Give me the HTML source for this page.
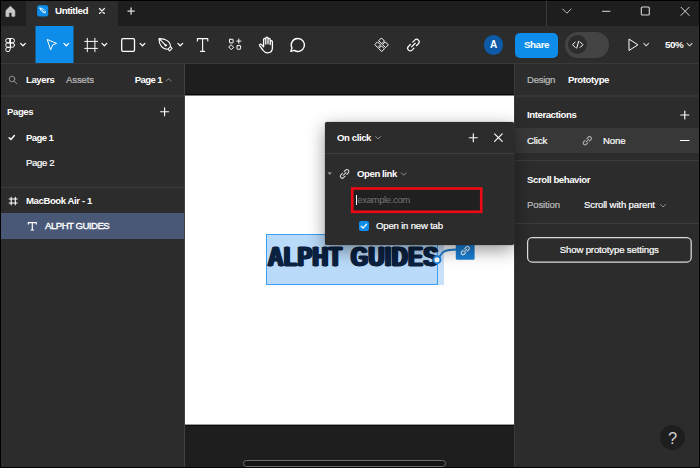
<!DOCTYPE html>
<html>
<head>
<meta charset="utf-8">
<style>
*{box-sizing:border-box;margin:0;padding:0}
html,body{width:700px;height:468px;overflow:hidden;background:#000}
body{font-family:"Liberation Sans",sans-serif;color:#fff;font-size:9.6px;position:relative}
.abs{position:absolute}
.t{position:absolute;white-space:nowrap;line-height:12px;font-size:9.6px;letter-spacing:-0.15px;-webkit-text-stroke:0.2px currentColor}
.b{font-weight:bold;letter-spacing:-0.42px;-webkit-text-stroke:0}
.g{color:#bcbcbc}
svg{position:absolute;overflow:visible;fill:none;stroke:#fff;stroke-width:1.15;stroke-linecap:round;stroke-linejoin:round}
#titlebar{left:1px;top:1px;width:698px;height:25px;background:#1e1e1e}
#hometab{left:1px;top:1px;width:25px;height:25px;background:#1f1f1f}
#filetab{left:26px;top:1px;width:92px;height:25px;background:#2c2c2c}
#toolbar{left:1px;top:26px;width:698px;height:38px;background:#2c2c2c}
#selbox{left:35.7px;top:26px;width:37.6px;height:37.5px;background:#0d8ce9}
#tbline{left:1px;top:63px;width:698px;height:1px;background:#3a3a3a}
#canvas{left:185px;top:64px;width:329px;height:403px;background:#1e1e1e}
#frame{left:185px;top:95px;width:328.6px;height:329.6px;background:#fff}
#leftp{left:1px;top:64px;width:183px;height:403px;background:#2c2c2c}
#rightp{left:514px;top:64px;width:185px;height:403px;background:#2c2c2c;border-left:1px solid #3a3a3a}
.hl{position:absolute;height:1px;background:#3d3d3d}
#selrow{left:1px;top:213px;width:183px;height:26px;background:#4a5878}
#popup{left:325px;top:122px;width:189px;height:123px;background:#2c2c2c;border-radius:2px;box-shadow:0 5px 17px rgba(0,0,0,.42),0 0 1px rgba(0,0,0,.7)}
</style>
</head>
<body>
<div class="abs" id="titlebar"></div>
<div class="abs" id="hometab"></div>
<div class="abs" id="filetab"></div>
<div class="abs" id="toolbar"></div>
<svg style="left:0;top:0" width="7" height="468"><rect x="35.5" y="26" width="38" height="37.7" fill="#0d8ce9" stroke="none"/></svg>
<div class="abs" id="tbline"></div>
<div class="abs" id="canvas"></div>
<svg style="left:0;top:0" width="700" height="468"><rect x="185" y="94.2" width="329" height="331.5" fill="#050505" stroke="none"/><rect x="185" y="95.5" width="329" height="329.1" fill="#fff" stroke="none"/></svg>
<div class="abs" id="leftp"></div>
<div class="abs" id="rightp"></div>

<!-- ===== title bar ===== -->
<svg style="left:0;top:0" width="700" height="26">
  <!-- home -->
  <path d="M6 16.2V10.5L10.4 6.3l4.4 4.2v5.7h-2.9v-3.8H8.9v3.8z" fill="#c8c8c8" stroke="#c8c8c8" stroke-width=".8"/>
  <!-- file icon -->
  <rect x="37.2" y="5.3" width="11" height="11.2" rx="2" fill="#0d8ce9" stroke="none"/>
  <path d="M40 8.2c2.6-.3 5 1.2 5.6 4.6-2.6.2-5-1.4-5.6-4.6zM40 8.2l4.2 4" stroke="#fff" stroke-width=".8"/>
  <!-- tab close -->
  <path d="M99.5 8.5l4.9 4.9M104.4 8.5l-4.9 4.9" stroke="#e6e6e6" stroke-width="1.35"/>
  <!-- plus -->
  <path d="M131.1 7.8v6.4M127.9 11h6.4" stroke="#e0e0e0" stroke-width="1.25"/>
  <!-- separator -->
  <path d="M546.5 1v25" stroke="#3a3a3a" stroke-width="1"/>
  <!-- chevron down -->
  <path d="M562.7 9l4.2 4.2 4.2-4.2" stroke="#bdbdbd" stroke-width="1"/>
  <!-- minimize -->
  <path d="M602.5 11.3h7.5" stroke="#d8d8d8" stroke-width="1"/>
  <!-- maximize -->
  <rect x="641.3" y="7" width="8" height="8" rx="1" stroke="#d8d8d8" stroke-width="1.1"/>
  <!-- close -->
  <path d="M681 7.2l8.2 8.2M689.2 7.2l-8.2 8.2" stroke="#d8d8d8" stroke-width="1"/>
</svg>
<div class="t b" style="left:55px;top:5px;font-size:9.8px">Untitled</div>

<!-- ===== toolbar ===== -->
<svg style="left:0;top:26px" width="700" height="38">
  <!-- figma logo (y offsets relative to 26) -->
  <g stroke="#fff" stroke-width="1" transform="translate(0,-26)">
    <path d="M10.1 38.5H7.9a2.2 2.2 0 0 0 0 4.4h2.2zM10.1 38.5h2.2a2.2 2.2 0 0 1 0 4.4h-2.2z"/>
    <path d="M10.1 42.9H7.9a2.2 2.2 0 0 0 0 4.4h2.2z"/>
    <circle cx="12.3" cy="45.1" r="2.2"/>
    <path d="M10.1 47.3H7.9a2.2 2.2 0 1 0 2.2 2.2z"/>
    <!-- chevrons -->
    <path d="M20.6 43.4l2.4 2.4 2.4-2.4" stroke-width="1.25"/>
    <path d="M63.9 43.4l2.4 2.4 2.4-2.4" stroke-width="1.25"/>
    <path d="M102.0 43.4l2.4 2.4 2.4-2.4" stroke-width="1.25"/>
    <path d="M140.1 43.4l2.4 2.4 2.4-2.4" stroke-width="1.25"/>
    <path d="M177.9 43.4l2.4 2.4 2.4-2.4" stroke-width="1.25"/>
    <path d="M643.8 43.4l2.4 2.4 2.4-2.4" stroke="#d4d4d4" stroke-width="1.05"/>
    <path d="M687.2 43.4l2.4 2.4 2.4-2.4" stroke="#d4d4d4" stroke-width="1.05"/>
    <!-- move arrow -->
    <path d="M47.6 39.6l9 3.8-4 1.6-1.8 4.6z"/>
    <!-- frame # -->
    <path d="M87.3 38.3v13.4M94.9 38.3v13.4M84.7 41.4h12.8M84.7 48.4h12.8"/>
    <!-- rect -->
    <rect x="121.7" y="38.6" width="12.8" height="12.8" rx="1.3" stroke-width="1.3"/>
    <!-- pen -->
    <path d="M159 38.6C165.5 38.4 170.6 41.5 170.5 46.7L172.1 48.3L169.6 50.8L167.9 49.2C162.5 49.4 158.8 45 159 38.6zM170.5 46.7L167.9 49.2M159 38.6L165 44.6" stroke-width="1.1"/>
    <circle cx="165.7" cy="45.3" r=".9" fill="#fff" stroke-width=".6"/>
    <!-- T -->
    <path d="M197.4 41v-2.4h10.4V41M202.6 38.6v12.8M200.6 51.4h4" stroke-width="1.1"/>
    <!-- resources -->
    <rect x="229.5" y="39.3" width="3.6" height="3.6" rx=".4"/>
    <path d="M238.8 39v4.2M236.7 41.1h4.2"/>
    <path d="M231.3 45l2.3 2.3-2.3 2.3-2.3-2.3z"/>
    <rect x="237" y="45.6" width="3.6" height="3.6" rx=".4"/>
    <!-- hand -->
    <path d="M263.6 44.5v-5a1.1 1.1 0 0 1 2.2 0v4.5M265.8 43.5v-5.3a1.1 1.1 0 0 1 2.2 0v5.3M268 43.8v-4.4a1.1 1.1 0 0 1 2.2 0v5M270.2 44.5v-2.8a1.1 1.1 0 0 1 2.2 0v6.3c0 3-2 4.8-4.8 4.8-2.4 0-3.6-1-4.8-2.8l-3-4.2c-.8-1.2.8-2.4 1.8-1.2l2 2.2V44" stroke-width="1.3"/>
    <!-- comment -->
    <path d="M297.9 38.5a6.5 6.5 0 1 1-3.6 11.9l-3.5.9 1.2-3.2a6.5 6.5 0 0 1 5.9-9.6z" stroke-width="1.35"/>
    <!-- components -->
    <path d="M381.70 38.25l2.75 2.75-2.75 2.75-2.75-2.75zM381.70 46.05l2.75 2.75-2.75 2.75-2.75-2.75zM377.80 42.15l2.75 2.75-2.75 2.75-2.75-2.75zM385.60 42.15l2.75 2.75-2.75 2.75-2.75-2.75z" stroke-width="1"/>
    <!-- link -->
    <g transform="translate(413.4,45.1) rotate(-45) scale(1.28)" stroke="#fff" stroke-width="0.94"><path d="M-1.3-2h-2.200a2 2 0 0 0 0 4h2.200M1.3-2h2.200a2 2 0 0 1 0 4h-2.200M-2 0h4"/></g>
    <!-- play -->
    <path d="M629 39.5v11l8.6-5.5z"/>
  </g>
</svg>
<!-- avatar -->
<div class="abs" style="left:483.8px;top:35.3px;width:19.4px;height:19.4px;border-radius:50%;background:#0c5aa8"></div>
<div class="t b" style="left:483.8px;top:39px;width:19.4px;text-align:center;font-size:10px;letter-spacing:0">A</div>
<!-- share -->
<div class="abs" style="left:515px;top:32.5px;width:43px;height:25.2px;border-radius:5px;background:#0d8ce9"></div>
<div class="t b" style="left:515px;top:39px;width:43px;text-align:center;font-size:9.8px">Share</div>
<!-- dev toggle -->
<div class="abs" style="left:565px;top:32px;width:43.8px;height:26px;border-radius:13px;background:#444"></div>
<div class="abs" style="left:568px;top:35px;width:19.4px;height:19.4px;border-radius:50%;background:#2c2c2c"></div>
<svg style="left:568px;top:35px" width="20" height="20"><path d="M7.2 7l-2.7 2.7 2.7 2.7M12.2 7l2.7 2.7-2.7 2.7M10.7 6.3l-2 6.8" stroke-width="1"/></svg>
<div class="t b" style="left:665px;top:39px;font-size:9.8px">50%</div>

<!-- ===== left panel ===== -->
<div class="hl" style="left:1px;top:95px;width:183.6px;height:2px;background:#353535"></div>
<svg style="left:0;top:64px" width="185" height="200">
  <g transform="translate(0,-64)">
    <circle cx="12" cy="79" r="2.8" stroke="#929292" stroke-width="1"/><path d="M14.2 81.2l2.6 2.6" stroke="#929292" stroke-width="1"/>
    <path d="M166.3 81l2.4-2.4 2.4 2.4" stroke="#929292" stroke-width=".9"/>
    <path d="M164.6 107.7v8M160.6 111.7h8"/>
    <path d="M9.1 137.7l1.8 1.8 3.5-4" stroke-width="1.4"/>
    <path d="M11.2 197.2v7.6M15.3 197.2v7.6M9.2 199h8M9.2 203h8" stroke-width="1.1"/>
  </g>
</svg>
<div class="t b" style="left:26px;top:73.5px">Layers</div>
<div class="t g" style="left:66px;top:73.5px">Assets</div>
<div class="t b" style="left:134.8px;top:73.5px;letter-spacing:-0.62px">Page 1</div>
<div class="t b" style="left:7px;top:106px">Pages</div>
<div class="t b" style="left:26px;top:131.6px;letter-spacing:-0.62px">Page 1</div>
<div class="t" style="left:26px;top:156.6px;letter-spacing:-0.35px">Page 2</div>
<div class="hl" style="left:1px;top:187.3px;width:183.6px"></div>
<div class="t b" style="left:26px;top:194.8px">MacBook Air - 1</div>
<div class="abs" id="selrow"></div>
<svg style="left:0;top:213px" width="185" height="26"><path d="M28.3 11.1V9.6h8v1.5M32.3 9.6v7.4M31 17h2.6" stroke-width="1.15"/></svg>
<div class="t" style="left:45px;top:220.3px;letter-spacing:-0.5px;-webkit-text-stroke:0.35px #fff">ALPHT GUIDES</div>

<div class="abs" style="left:184px;top:64px;width:1px;height:403px;background:#414141"></div>
<!-- ===== right panel ===== -->
<div class="t g" style="left:527px;top:73.5px;letter-spacing:-0.3px">Design</div>
<div class="t b" style="left:568px;top:73.5px">Prototype</div>
<div class="hl" style="left:514px;top:95px;width:185px;height:2px;background:#353535"></div>
<div class="t b" style="left:527px;top:109px">Interactions</div>
<div class="abs" style="left:514px;top:127.8px;width:185px;height:25.5px;background:#383838"></div>
<div class="t" style="left:527px;top:134.5px">Click</div>
<div class="t" style="left:603px;top:134.5px">None</div>
<svg style="left:514px;top:95px" width="186" height="180">
  <g transform="translate(-514,-95)">
    <path d="M684.8 111v8M680.8 115h8"/>
    <path d="M680.5 140.5h8.5"/>
    <g transform="translate(587.3,140.7) rotate(-45) scale(0.92)" stroke="#b8b8b8" stroke-width="1.09"><path d="M-1.3-2h-2.200a2 2 0 0 0 0 4h2.200M1.3-2h2.200a2 2 0 0 1 0 4h-2.200M-2 0h4"/></g>
    <path d="M660.5 204.5l2.5 2.5 2.5-2.5" stroke="#9a9a9a" stroke-width=".9"/>
  </g>
</svg>
<div class="hl" style="left:514px;top:159.5px;width:185px"></div>
<div class="t b" style="left:527px;top:173.5px">Scroll behavior</div>
<div class="t g" style="left:527px;top:199px">Position</div>
<div class="t" style="left:584px;top:199px">Scroll with parent</div>
<div class="hl" style="left:514px;top:223px;width:185px"></div>
<svg style="left:0;top:0" width="700" height="468"><rect x="527.6" y="237.5" width="163.6" height="24.5" rx="4.5" stroke="#dcdcdc" stroke-width="1.25"/></svg>
<div class="t" style="left:527px;top:243.7px;width:164.5px;text-align:center">Show prototype settings</div>

<!-- ===== canvas selection ===== -->
<div class="abs" style="left:438px;top:240px;width:5.8px;height:44.8px;background:#c9e1f8"></div>
<div class="abs" style="left:266px;top:234.4px;width:172px;height:50.8px;background:#b9daf8;border:1px solid #3a9ff5"></div>

<div class="abs" id="big1" style="left:267.8px;top:241.6px;transform:scaleX(0.762);font-size:27.8px;line-height:30px;color:#0b2140;font-weight:bold;white-space:nowrap;letter-spacing:1.0px;transform-origin:0 0;-webkit-text-stroke:0.9px #0b2140;text-shadow:2.0px 0 0 #0b2140,-2.0px 0 0 #0b2140,1.0px 0 0 #0b2140,-1.0px 0 0 #0b2140">ALPHT</div>
<div class="abs" id="big2" style="left:350.6px;top:241.6px;transform:scaleX(0.779);font-size:27.8px;line-height:30px;color:#0b2140;font-weight:bold;white-space:nowrap;letter-spacing:1.0px;transform-origin:0 0;-webkit-text-stroke:0.9px #0b2140;text-shadow:2.0px 0 0 #0b2140,-2.0px 0 0 #0b2140,1.0px 0 0 #0b2140,-1.0px 0 0 #0b2140">GUIDES</div>
<!-- link bubble -->
<svg style="left:420px;top:236px" width="70" height="40">
  <g transform="translate(-420,-236)">
    <path d="M439.5 256.8c2.5-5.5 6-7.2 16.5-7.3" stroke="#1a7fd9" stroke-width="2"/>
    <rect x="455.8" y="240" width="18.8" height="19.7" rx="1.5" fill="#1a7fd4" stroke="none"/>
    <g transform="translate(465.3,250.6) rotate(-45) scale(0.9)" stroke="#e6f2fd" stroke-width="1.33"><path d="M-1.3-2h-2.200a2 2 0 0 0 0 4h2.200M1.3-2h2.200a2 2 0 0 1 0 4h-2.200M-2 0h4"/></g>
    <circle cx="437" cy="259.7" r="3.5" fill="#fff" stroke="#1a7fd9" stroke-width="1.9"/>
  </g>
</svg>

<!-- ===== popup ===== -->
<div class="abs" id="popup"></div>
<div class="t b" style="left:337px;top:131.5px">On click</div>
<div class="hl" style="left:325px;top:153.2px;width:189px"></div>
<div class="t b" style="left:357px;top:167.8px">Open link</div>
<svg style="left:0;top:0" width="700" height="468"><rect x="352.2" y="188.5" width="129" height="23.3" fill="#202020" stroke="#ee0a14" stroke-width="2.6" stroke-linejoin="miter"/></svg>
<div class="abs" style="left:356.3px;top:194.5px;width:1px;height:10.5px;background:#fff"></div>
<div class="t" style="left:357.3px;top:193.8px;color:#747474;letter-spacing:-0.4px;-webkit-text-stroke:0">example.com</div>
<div class="abs" style="left:358.7px;top:221px;width:10.2px;height:10.2px;border-radius:2px;background:#0d8ce9"></div>
<div class="t" style="left:376px;top:220.3px;letter-spacing:-0.2px">Open in new tab</div>
<svg style="left:325px;top:122px" width="189" height="122">
  <g transform="translate(-325,-122)">
    <path d="M375.6 136.5l2.5 2.5 2.5-2.5" stroke="#9a9a9a" stroke-width=".9"/>
    <path d="M473.3 133.7v8M469.3 137.7h8"/>
    <path d="M494.6 133.8l7.6 7.6M502.2 133.8l-7.6 7.6"/>
    <path d="M327.4 172.2h4.6l-2.3 3z" fill="#8a8a8a" stroke="none"/>
    <g transform="translate(344.6,173.9) rotate(-45) scale(0.95)" stroke="#e4e4e4" stroke-width="1.05"><path d="M-1.3-2h-2.200a2 2 0 0 0 0 4h2.200M1.3-2h2.200a2 2 0 0 1 0 4h-2.200M-2 0h4"/></g>
    <path d="M401.3 172.8l2.4 2.4 2.4-2.4" stroke="#9a9a9a" stroke-width=".9"/>
    <path d="M361.2 226.2l1.9 1.9 3.4-3.8" stroke-width="1.3"/>
  </g>
</svg>

<!-- ===== bottom ===== -->
<div class="abs" style="left:243px;top:460px;width:203px;height:6.5px;border-radius:4px;background:#141414;border:1px solid #6e6e6e"></div>
<div class="abs" style="left:660px;top:425px;width:25px;height:25px;border-radius:50%;background:#1e1e1e"></div>
<div class="t" id="q" style="left:660px;top:430px;width:25px;text-align:center;font-size:16.5px;line-height:17px;color:#d0d0d0;-webkit-text-stroke:0;letter-spacing:0">?</div>

<!-- outer borders -->
<div class="abs" style="left:0;top:466.6px;width:700px;height:2px;background:#000"></div>
<div class="abs" style="left:699px;top:0;width:1px;height:468px;background:#000"></div>
</body>
</html>
